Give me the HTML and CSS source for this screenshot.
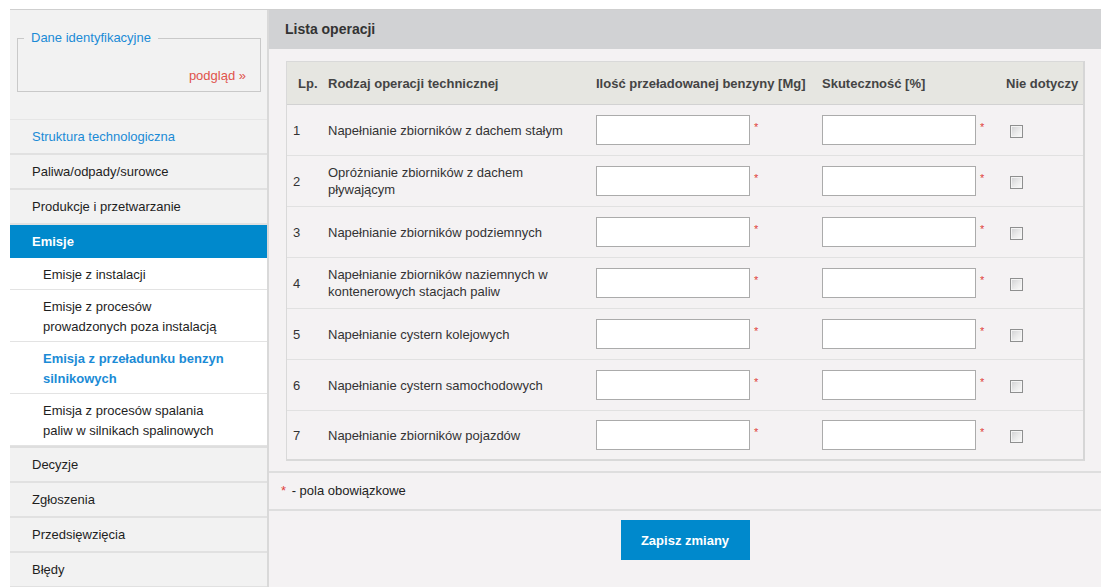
FILE: index.html
```html
<!DOCTYPE html>
<html lang="pl">
<head>
<meta charset="utf-8">
<title>Lista operacji</title>
<link rel="stylesheet" href="styles.css">
</head>
<body>
<div class="page">
  <aside class="sidebar">
    <div class="ident">
      <fieldset class="ident-box">
        <legend class="ident-legend">Dane identyfikacyjne</legend>
        <div class="preview-row"><a class="preview" href="#">podgląd »</a></div>
      </fieldset>
    </div>
    <nav class="menu">
      <a class="item item-blue" href="#">Struktura technologiczna</a>
      <a class="item" href="#">Paliwa/odpady/surowce</a>
      <a class="item" href="#">Produkcje i przetwarzanie</a>
      <a class="item active" href="#">Emisje</a>
      <div class="submenu">
        <a class="sub" href="#">Emisje z instalacji</a>
        <a class="sub" href="#">Emisje z procesów<br>prowadzonych poza instalacją</a>
        <a class="sub sub-current" href="#">Emisja z przeładunku benzyn<br>silnikowych</a>
        <a class="sub" href="#">Emisja z procesów spalania<br>paliw w silnikach spalinowych</a>
      </div>
      <a class="item" href="#">Decyzje</a>
      <a class="item" href="#">Zgłoszenia</a>
      <a class="item" href="#">Przedsięwzięcia</a>
      <a class="item" href="#">Błędy</a>
    </nav>
  </aside>
  <main class="main">
    <div class="main-header">Lista operacji</div>
    <div class="table-wrap">
      <table class="ops">
        <colgroup>
          <col class="c-lp"><col class="c-name"><col class="c-qty"><col class="c-eff"><col class="c-na">
        </colgroup>
        <thead>
          <tr>
            <th class="th-lp">Lp.</th>
            <th>Rodzaj operacji technicznej</th>
            <th>Ilość przeładowanej benzyny [Mg]</th>
            <th>Skuteczność [%]</th>
            <th>Nie dotyczy</th>
          </tr>
        </thead>
        <tbody>
          <tr><td>1</td><td>Napełnianie zbiorników z dachem stałym</td><td><input class="field" type="text"><span class="req">*</span></td><td><input class="field" type="text"><span class="req">*</span></td><td><input class="check" type="checkbox"></td></tr>
          <tr><td>2</td><td>Opróżnianie zbiorników z dachem<br>pływającym</td><td><input class="field" type="text"><span class="req">*</span></td><td><input class="field" type="text"><span class="req">*</span></td><td><input class="check" type="checkbox"></td></tr>
          <tr><td>3</td><td>Napełnianie zbiorników podziemnych</td><td><input class="field" type="text"><span class="req">*</span></td><td><input class="field" type="text"><span class="req">*</span></td><td><input class="check" type="checkbox"></td></tr>
          <tr><td>4</td><td>Napełnianie zbiorników naziemnych w<br>kontenerowych stacjach paliw</td><td><input class="field" type="text"><span class="req">*</span></td><td><input class="field" type="text"><span class="req">*</span></td><td><input class="check" type="checkbox"></td></tr>
          <tr><td>5</td><td>Napełnianie cystern kolejowych</td><td><input class="field" type="text"><span class="req">*</span></td><td><input class="field" type="text"><span class="req">*</span></td><td><input class="check" type="checkbox"></td></tr>
          <tr><td>6</td><td>Napełnianie cystern samochodowych</td><td><input class="field" type="text"><span class="req">*</span></td><td><input class="field" type="text"><span class="req">*</span></td><td><input class="check" type="checkbox"></td></tr>
          <tr><td>7</td><td>Napełnianie zbiorników pojazdów</td><td><input class="field" type="text"><span class="req">*</span></td><td><input class="field" type="text"><span class="req">*</span></td><td><input class="check" type="checkbox"></td></tr>
        </tbody>
      </table>
    </div>
    <div class="note"><span class="req-note">*</span> - pola obowiązkowe</div>
    <div class="actions"><button class="save" type="button">Zapisz zmiany</button></div>
  </main>
</div>
</body>
</html>
```

FILE: styles.css
```css
html, body {
  margin: 0;
  padding: 0;
  background: #ffffff;
  overflow: hidden;
}
body {
  font-family: "Liberation Sans", Arial, sans-serif;
  font-size: 13px;
  color: #222;
}
a { text-decoration: none; }

.page {
  display: flex;
  margin: 9px 0 0 10px;
  width: 1091px;
  border-top: 1px solid #cfcfcf;
  min-height: 577px;
}

/* Sidebar */
.sidebar {
  width: 257px;
  flex: none;
  background: #f2f2f2;
  border-right: 2px solid #d9d9d9;
}
.ident {
  box-sizing: border-box;
  height: 110px;
  padding: 20px 6px 0 7px;
  border-bottom: 1px solid #e6e6e6;
}
.ident-box {
  margin: 0;
  border: 1px solid #c9c9c9;
  padding: 22px 14px 7px 0;
  text-align: left;
  line-height: 16px;
}
.ident-legend {
  margin-left: 6px;
  padding: 0 7px;
  color: #1b8bd6;
  line-height: 16px;
}
.preview-row {
  text-align: right;
}
.preview {
  color: #e0524b;
}

.menu {
  display: flex;
  flex-direction: column;
}
.item {
  display: block;
  box-sizing: border-box;
  height: 35px;
  line-height: 33px;
  padding-left: 22px;
  color: #1e1e1e;
  border-bottom: 2px solid #e1e1e1;
}
.item-blue { color: #1b8bd6; }
.item.active {
  height: 33px;
  background: #0089cc;
  color: #fff;
  font-weight: bold;
  border-bottom: 0;
}
.submenu {
  background: #fff;
  border-bottom: 2px solid #dedede;
}
.sub {
  display: block;
  padding: 7px 0 4px 33px;
  line-height: 20px;
  color: #1e1e1e;
  border-bottom: 1px solid #e3e3e3;
}
.sub-current {
  color: #1b8bd6;
  font-weight: bold;
}

/* Main */
.main {
  width: 832px;
  flex: none;
  background: #f4f2f3;
}
.main-header {
  height: 39px;
  line-height: 39px;
  padding-left: 16px;
  background: #d1d2d4;
  font-size: 14px;
  font-weight: bold;
  color: #333;
}
.table-wrap {
  margin: 12px 16px 0 17px;
  border: 1px solid #d9d9d9;
  border-right: 2px solid #d6d6d6;
  border-bottom: 2px solid #d9d9d9;
}
.ops {
  width: 100%;
  border-collapse: collapse;
  table-layout: fixed;
}
.c-lp { width: 35px; }
.c-name { width: 268px; }
.c-qty { width: 226px; }
.c-eff { width: 184px; }
.c-na { width: 83px; }
.ops th {
  background: #e6e6e1;
  height: 41px;
  padding: 1px 0 0 6px;
  text-align: left;
  font-weight: bold;
  color: #444;
  border-bottom: 1px solid #d2d2d2;
  white-space: nowrap;
}
.ops .th-lp { padding-left: 11px; }
.ops td {
  height: 50px;
  padding: 0 0 0 6px;
  vertical-align: middle;
  color: #333;
  line-height: 17px;
  border-bottom: 1px solid #e1e1e1;
}
.ops tbody tr:last-child td { border-bottom: 0; height: 48px; }
.field {
  box-sizing: border-box;
  width: 154px;
  height: 30px;
  border: 1px solid #ababab;
  background: #fff;
  margin: 0;
  padding: 0 4px;
  vertical-align: middle;
  font: inherit;
}
.req {
  display: inline-block;
  margin-left: 4px;
  color: #e0403a;
  font-size: 11px;
  vertical-align: 2px;
}
.check {
  -webkit-appearance: none;
  appearance: none;
  box-sizing: border-box;
  width: 13px;
  height: 13px;
  margin: 0 0 0 4px;
  border: 1px solid #8e8f8f;
  background: linear-gradient(135deg, #cfd0d2 0%, #ebebeb 55%, #fbfbfb 100%);
  box-shadow: inset 0 0 0 1px #f4f4f4;
  vertical-align: middle;
}
.note {
  margin-top: 10px;
  border-top: 2px solid #dedede;
  border-bottom: 2px solid #dedede;
  height: 36px;
  line-height: 36px;
  padding-left: 12px;
  color: #222;
}
.req-note {
  color: #e0403a;
  margin-right: 2px;
}
.actions {
  display: flex;
  justify-content: center;
  padding-top: 9px;
}
.save {
  width: 129px;
  height: 40px;
  border: 0;
  background: #0089cc;
  color: #fff;
  font-family: "Liberation Sans", Arial, sans-serif;
  font-size: 13px;
  font-weight: bold;
  cursor: pointer;
}
```
